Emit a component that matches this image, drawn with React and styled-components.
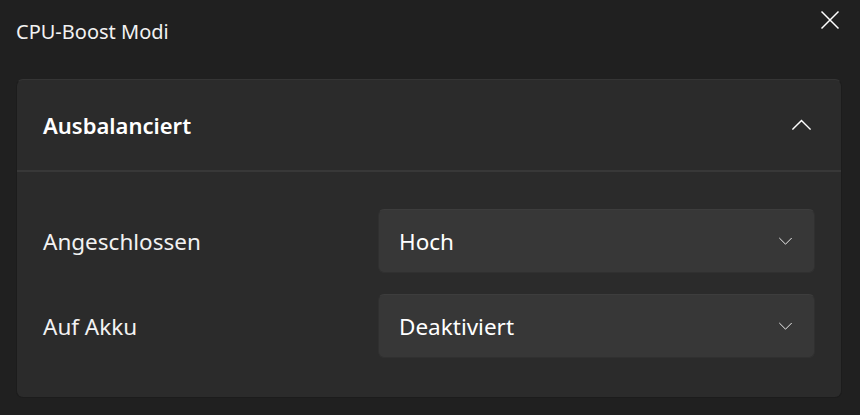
import styled, { createGlobalStyle } from 'styled-components';

const GlobalStyle = createGlobalStyle`
  html, body {
    margin: 0;
    padding: 0;
    background: #202020;
  }
  body {
    font-family: "Noto Sans", "Open Sans", sans-serif;
    color: #ffffff;
  }
`;

const Window = styled.div`
  width: 860px;
  height: 415px;
  box-sizing: border-box;
  background: #202020;
  padding: 0 18px 0 16px;
  display: flex;
  flex-direction: column;
`;

const TitleBar = styled.div`
  height: 79px;
  display: flex;
  align-items: flex-start;
  justify-content: space-between;
`;

const Title = styled.h1`
  margin: 18px 0 0 0;
  font-size: 20px;
  font-weight: 400;
  line-height: 27px;
  color: #f2f2f2;
`;

const CloseButton = styled.button`
  margin: 8px 0 0 0;
  width: 24px;
  height: 24px;
  padding: 0;
  border: none;
  background: transparent;
  display: flex;
  align-items: center;
  justify-content: center;
`;

const Card = styled.section`
  height: 319px;
  box-sizing: border-box;
  background: #2b2b2b;
  border: 1px solid #1c1c1c;
  border-top-color: #353535;
  border-radius: 7px;
  display: flex;
  flex-direction: column;
`;

const CardHeader = styled.div`
  height: 90px;
  display: flex;
  align-items: center;
  justify-content: space-between;
  padding: 0 30px 0 26px;
  border-bottom: 2px solid #383838;
`;

const CardTitle = styled.h2`
  margin: 0;
  font-size: 22px;
  font-weight: 600;
  color: #ffffff;
`;

const CardBody = styled.div`
  padding: 37px 26px 0 26px;
  display: flex;
  flex-direction: column;
  gap: 21px;
`;

const SettingRow = styled.div`
  display: grid;
  grid-template-columns: 335px 437px;
  align-items: center;
`;

const Label = styled.span`
  font-size: 22.5px;
  color: #f2f2f2;
`;

const Select = styled.div`
  height: 64px;
  box-sizing: border-box;
  background: #373737;
  border: 1px solid #303030;
  border-top-color: #3d3d3d;
  border-radius: 6px;
  display: flex;
  align-items: center;
  justify-content: space-between;
  padding: 0 22px 0 20px;
  font-size: 22.5px;
  color: #ffffff;
`;

const Chevron = ({ up, size }) => (
  <svg width={size} height={size / 2 + 2} viewBox="0 0 20 11" fill="none">
    <path
      d={up ? 'M1 10 L10 1 L19 10' : 'M1 1 L10 10 L19 1'}
      stroke="#ffffff"
      strokeWidth={up ? 1.6 : 1.4}
      strokeLinecap="square"
    />
  </svg>
);

const settings = [
  { label: 'Angeschlossen', value: 'Hoch' },
  { label: 'Auf Akku', value: 'Deaktiviert' },
];

export default function App() {
  return (
    <>
      <GlobalStyle />
      <Window>
        <TitleBar>
          <Title>CPU-Boost Modi</Title>
          <CloseButton aria-label="Schließen">
            <svg width="20" height="20" viewBox="0 0 20 20">
              <path d="M1.5 1.5 L18.5 18.5 M18.5 1.5 L1.5 18.5" stroke="#ffffff" strokeWidth="1.5" />
            </svg>
          </CloseButton>
        </TitleBar>
        <Card>
          <CardHeader>
            <CardTitle>Ausbalanciert</CardTitle>
            <Chevron up size={19} />
          </CardHeader>
          <CardBody>
            {settings.map((s) => (
              <SettingRow key={s.label}>
                <Label>{s.label}</Label>
                <Select>
                  {s.value}
                  <Chevron size={13} />
                </Select>
              </SettingRow>
            ))}
          </CardBody>
        </Card>
      </Window>
    </>
  );
}
